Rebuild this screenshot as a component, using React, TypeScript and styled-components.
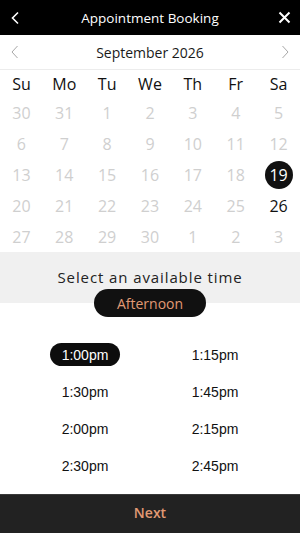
import styled, { createGlobalStyle } from 'styled-components';
import { useState } from 'react';

const GlobalStyle = createGlobalStyle`
  html, body {
    margin: 0;
    padding: 0;
    background: #fff;
  }
  body {
    font-family: 'Open Sans', 'Noto Sans', sans-serif;
  }
  * {
    box-sizing: border-box;
  }
`;

const WEEKDAYS = ['Su', 'Mo', 'Tu', 'We', 'Th', 'Fr', 'Sa'];
const TIMES = ['1:00pm', '1:15pm', '1:30pm', '1:45pm', '2:00pm', '2:15pm', '2:30pm', '2:45pm'];

type Day = { date: number; inMonth: boolean; available: boolean };

function buildMonth(year: number, month: number): Day[] {
  const first = new Date(year, month, 1);
  const start = new Date(year, month, 1 - first.getDay());
  const days: Day[] = [];
  for (let i = 0; i < 35; i++) {
    const d = new Date(start.getFullYear(), start.getMonth(), start.getDate() + i);
    const inMonth = d.getMonth() === month;
    days.push({
      date: d.getDate(),
      inMonth,
      available: inMonth && d.getDay() === 6 && d.getDate() >= 19,
    });
  }
  return days;
}

function App() {
  const [selectedDay, setSelectedDay] = useState(19);
  const [selectedTime, setSelectedTime] = useState('1:00pm');
  const days = buildMonth(2026, 8);

  return (
    <Page>
      <GlobalStyle />
      <Header>
        <IconButton aria-label="Back">
          <svg width="10" height="14" viewBox="0 0 10 14" fill="none">
            <path d="M7 1.5L1.5 7l5.5 5.5" stroke="#fff" strokeWidth="1.6" />
          </svg>
        </IconButton>
        <Title>Appointment Booking</Title>
        <IconButton aria-label="Close">
          <svg width="13" height="13" viewBox="0 0 13 13" fill="none">
            <path d="M1.5 1.5l10 10M11.5 1.5l-10 10" stroke="#fff" strokeWidth="2" />
          </svg>
        </IconButton>
      </Header>

      <MonthBar>
        <MonthArrow aria-label="Previous month">
          <svg width="8" height="14" viewBox="0 0 8 14" fill="none">
            <path d="M6.5 1L1 7l5.5 6" stroke="#a8a8a8" strokeWidth="1" />
          </svg>
        </MonthArrow>
        <MonthLabel>September 2026</MonthLabel>
        <MonthArrow aria-label="Next month">
          <svg width="8" height="14" viewBox="0 0 8 14" fill="none">
            <path d="M1.5 1L7 7l-5.5 6" stroke="#a8a8a8" strokeWidth="1" />
          </svg>
        </MonthArrow>
      </MonthBar>

      <Calendar>
        {WEEKDAYS.map((w) => (
          <Weekday key={w}>{w}</Weekday>
        ))}
        {days.map((d, i) => (
          <DayCell key={i}>
            <DayNumber
              $available={d.available}
              $selected={d.available && d.date === selectedDay}
              onClick={() => d.available && setSelectedDay(d.date)}
            >
              {d.date}
            </DayNumber>
          </DayCell>
        ))}
      </Calendar>

      <TimeHeader>
        <TimeTitle>Select an available time</TimeTitle>
        <PeriodPill>Afternoon</PeriodPill>
      </TimeHeader>

      <TimeGrid>
        {TIMES.map((t) => (
          <TimeCell key={t}>
            <TimeSlot $selected={t === selectedTime} onClick={() => setSelectedTime(t)}>
              {t}
            </TimeSlot>
          </TimeCell>
        ))}
      </TimeGrid>

      <Footer>
        <NextButton>Next</NextButton>
      </Footer>
    </Page>
  );
}

export default App;

const Page = styled.div`
  display: flex;
  flex-direction: column;
  width: 100%;
  height: 100vh;
  background: #fff;
  & > * {
    flex-shrink: 0;
  }
`;

const Header = styled.div`
  display: flex;
  align-items: center;
  justify-content: space-between;
  height: 35px;
  padding: 0 7px 0 7px;
  background: #000;
`;

const IconButton = styled.button`
  display: flex;
  align-items: center;
  justify-content: center;
  width: 18px;
  height: 24px;
  padding: 0;
  border: none;
  background: none;
  cursor: pointer;
`;

const Title = styled.span`
  color: #fff;
  font-size: 13.5px;
  letter-spacing: 0;
`;

const MonthBar = styled.div`
  display: flex;
  align-items: center;
  justify-content: space-between;
  height: 35px;
  padding: 0 10px;
  border-bottom: 1px solid #ececec;
`;

const MonthArrow = styled.button`
  display: flex;
  align-items: center;
  justify-content: center;
  width: 10px;
  height: 20px;
  padding: 0;
  border: none;
  background: none;
  cursor: pointer;
`;

const MonthLabel = styled.span`
  color: #1a1a1a;
  font-size: 14px;
`;

const Calendar = styled.div`
  display: grid;
  grid-template-columns: repeat(7, 1fr);
  grid-template-rows: 27px repeat(5, 31px);
`;

const Weekday = styled.div`
  display: flex;
  align-items: center;
  justify-content: center;
  padding-top: 1px;
  color: #111;
  font-size: 16px;
`;

const DayCell = styled.div`
  display: flex;
  align-items: center;
  justify-content: center;
`;

const DayNumber = styled.span<{ $available: boolean; $selected: boolean }>`
  display: flex;
  align-items: center;
  justify-content: center;
  width: 28px;
  height: 28px;
  border-radius: 50%;
  font-size: 16px;
  color: ${({ $available, $selected }) => ($selected ? '#fff' : $available ? '#111' : '#cfcfcf')};
  background: ${({ $selected }) => ($selected ? '#111' : 'transparent')};
  cursor: ${({ $available }) => ($available ? 'pointer' : 'default')};
`;

const TimeHeader = styled.div`
  display: flex;
  flex-direction: column;
  align-items: center;
  padding-top: 15px;
  background: linear-gradient(#f0f0f0 51px, #fff 51px);
`;

const TimeTitle = styled.span`
  color: #222;
  font-size: 15px;
  letter-spacing: 0.9px;
  line-height: 20px;
`;

const PeriodPill = styled.div`
  display: flex;
  align-items: center;
  justify-content: center;
  width: 112px;
  height: 28px;
  margin-top: 2px;
  border-radius: 14px;
  background: #111;
  color: #e19a74;
  font-size: 14px;
`;

const TimeGrid = styled.div`
  flex: 1;
  display: grid;
  grid-template-columns: 1fr 1fr;
  grid-auto-rows: 37px;
  align-content: start;
  padding: 19px 20px 0;
`;

const TimeCell = styled.div`
  display: flex;
  align-items: center;
  justify-content: center;
`;

const TimeSlot = styled.span<{ $selected: boolean }>`
  display: flex;
  align-items: center;
  justify-content: center;
  height: 23px;
  padding: 0 12px;
  border-radius: 12px;
  font-family: 'Liberation Sans', Arial, sans-serif;
  font-size: 14px;
  color: ${({ $selected }) => ($selected ? '#fff' : '#111')};
  background: ${({ $selected }) => ($selected ? '#0d0d0d' : 'transparent')};
  cursor: pointer;
`;

const Footer = styled.div`
  display: flex;
  align-items: center;
  justify-content: center;
  height: 39px;
  padding-bottom: 3px;
  background: #222;
  border-top: 1px solid #3a3a3a;
`;

const NextButton = styled.button`
  border: none;
  background: none;
  color: #e19a74;
  font-family: 'Open Sans', sans-serif;
  font-size: 14px;
  font-weight: 600;
  cursor: pointer;
`;
